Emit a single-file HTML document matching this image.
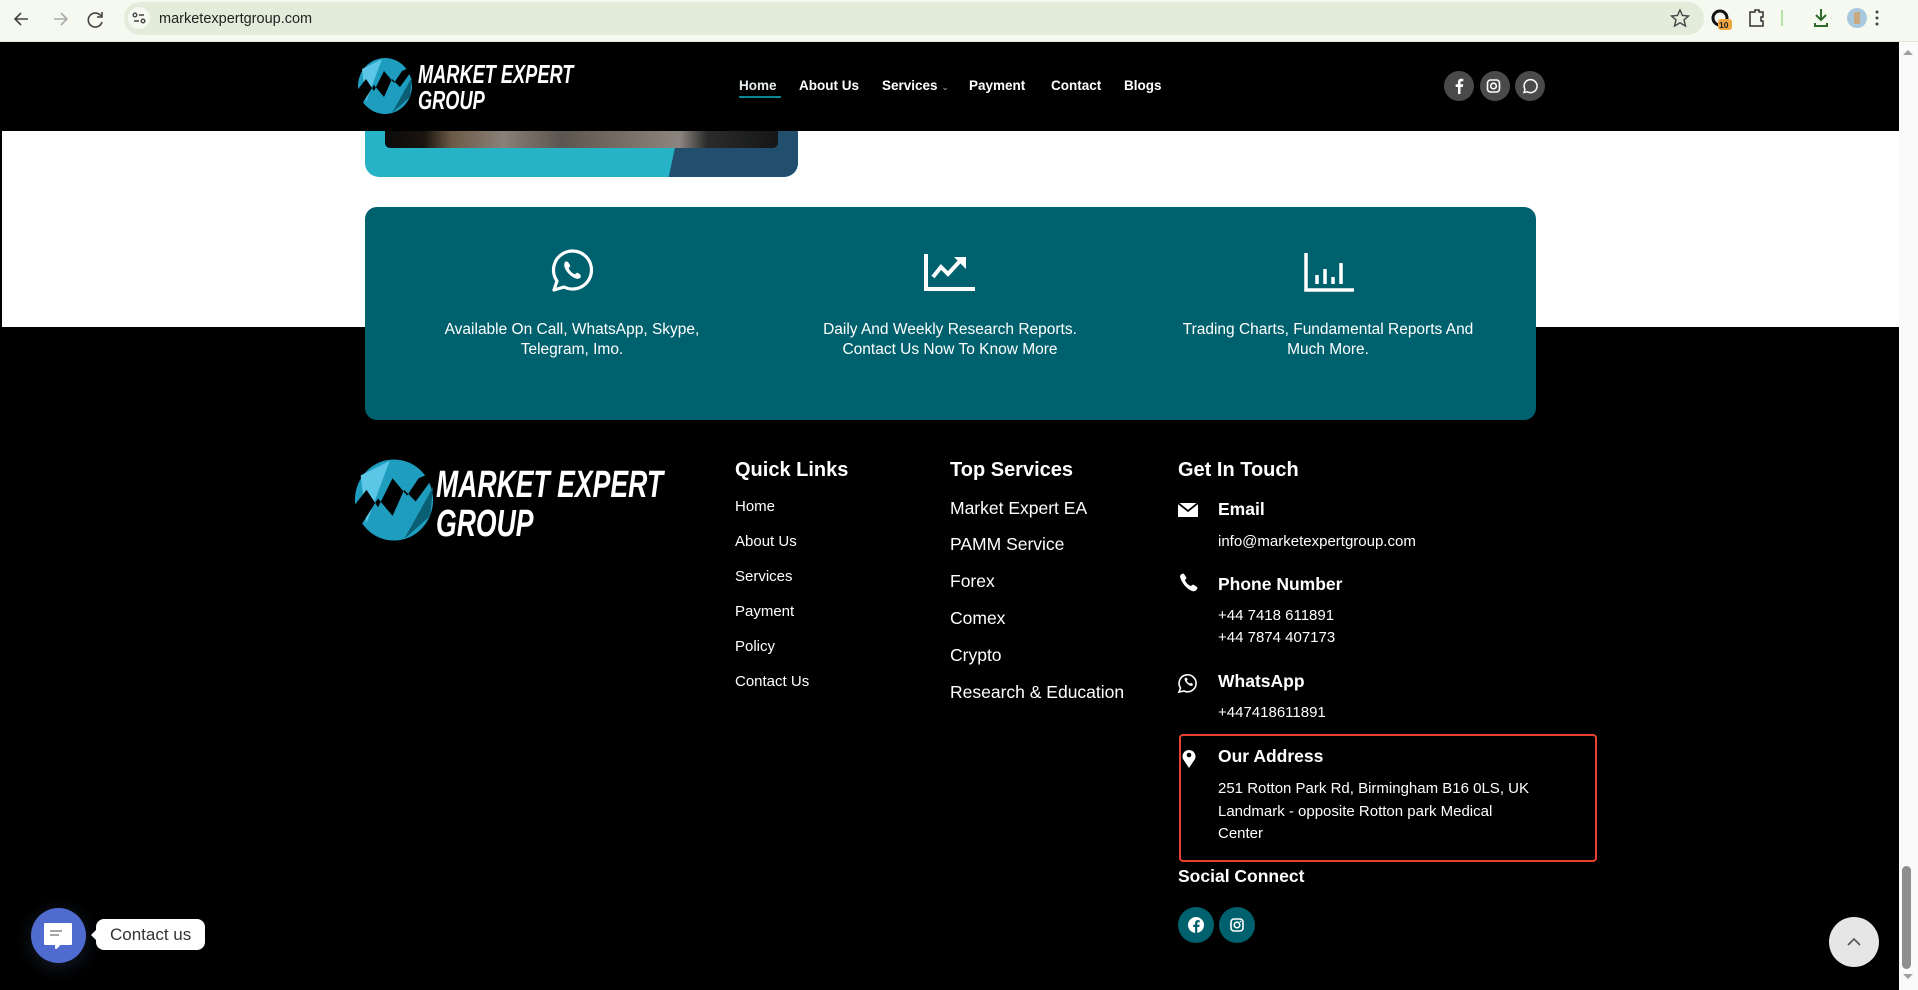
<!DOCTYPE html>
<html><head><meta charset="utf-8">
<style>
*{margin:0;padding:0;box-sizing:border-box}
body{width:1918px;height:990px;overflow:hidden;background:#000;font-family:"Liberation Sans",sans-serif;position:relative;color:#fff}
.abs{position:absolute}
.chrome{left:0;top:0;width:1918px;height:42px;background:#f5f9f0;border-bottom:1px solid #dfe5da}
.url{left:124px;top:2px;width:1580px;height:33px;background:#e3ecdb;border-radius:17px}
.hdr{left:0;top:42px;width:1899px;height:89px;background:#000}
.white{left:2px;top:131px;width:1897px;height:196px;background:#fff}
.nav{top:78px;font-size:13.5px;font-weight:bold;color:#fff}
.soc{width:30px;height:30px;border-radius:50%;background:#4a4a4a;top:71px}
.logo-t{font-style:italic;font-weight:bold;color:#fff;line-height:1;white-space:nowrap;transform-origin:0 0;transform:scaleX(0.7)}
.teal{left:365px;top:207px;width:1171px;height:213px;background:#00616e;border-radius:12px}
.ft{font-size:15.5px;text-align:center;line-height:20px;color:#fff;width:380px}
.h{font-size:20px;font-weight:bold}
.ql{font-size:15px;left:735px}
.ts{font-size:17.5px;left:950px}
.lbl{left:1218px;font-size:17.5px;font-weight:bold}
.val{left:1218px;font-size:15px;line-height:22px}
</style></head><body>
<div class="abs chrome"></div>
<div class="abs url"></div>
<svg class="abs" style="left:0;top:0" width="1918" height="42">
<g stroke="#444" stroke-width="1.6" fill="none">
<path d="M28 19h-12M21 13l-6 6 6 6"/>
<path d="M54 19h12M61 13l6 6-6 6" stroke="#aaa"/>
<path d="M101 16a7 7 0 1 0 1 6M102 12v5h-5"/>
</g>
<circle cx="139" cy="18" r="11" fill="#f5f9f0"/>
<g stroke="#444" stroke-width="1.4" fill="none"><circle cx="135" cy="15" r="1.8"/><path d="M139 15h5M134 21h5"/><circle cx="143" cy="21" r="1.8"/></g>
<text x="159" y="23" font-size="14.5" fill="#222" font-family="Liberation Sans">marketexpertgroup.com</text>
<path d="M1680 10l2.5 5.5 6 .5-4.5 4 1.5 6-5.5-3.2-5.5 3.2 1.5-6-4.5-4 6-.5z" fill="none" stroke="#444" stroke-width="1.4"/>
<circle cx="1720" cy="18" r="7" fill="none" stroke="#111" stroke-width="3"/>
<rect x="1718" y="19" width="14" height="11" rx="3" fill="#f0a640"/><text x="1719" y="28" font-size="8.5" fill="#222" font-weight="bold">10</text>
<path d="M1750 12h5v-2h4v2h4v5h-2v4h2v5h-13z" fill="none" stroke="#333" stroke-width="1.5"/>
<rect x="1781" y="10" width="2" height="16" fill="#b6e3a8"/>
<path d="M1821 9v10M1816 15l5 5 5-5M1815 23v3h12v-3" fill="none" stroke="#2e6b2a" stroke-width="2"/>
<circle cx="1857" cy="18" r="10" fill="#a8c8e0"/><rect x="1854" y="12" width="6" height="12" fill="#caa880"/>
<circle cx="1877" cy="12" r="1.5" fill="#444"/><circle cx="1877" cy="18" r="1.5" fill="#444"/><circle cx="1877" cy="24" r="1.5" fill="#444"/>
</svg>
<div class="abs hdr"></div>
<svg class="abs" style="left:352px;top:57px" width="66" height="58" viewBox="0 0 66 58">
<ellipse cx="33" cy="29" rx="27" ry="28" fill="#1e9dbf"/>
<path d="M10 12 L30 2 L14 45z" fill="#5cc6e6"/><path d="M40 56 L60 20 L58 40z" fill="#0a5f74"/>
<path d="M0 40 L14 22 L22 34 L32 14 L42 26 L50 14 L64 8 L48 30 L40 22 L32 40 L22 28 L8 50z" fill="#000"/>
</svg>
<div class="abs logo-t" style="left:418px;top:61px;font-size:26px">MARKET EXPERT</div>
<div class="abs logo-t" style="left:418px;top:87px;font-size:26px">GROUP</div>
<div class="abs nav" style="left:739px;color:#e6eef0">Home</div>
<div class="abs" style="left:739px;top:96px;width:42px;height:2px;background:#0a8592"></div>
<div class="abs nav" style="left:799px">About Us</div>
<div class="abs nav" style="left:882px">Services <span style="font-size:9px;color:#aaa;font-weight:normal">&#8964;</span></div>
<div class="abs nav" style="left:969px">Payment</div>
<div class="abs nav" style="left:1051px">Contact</div>
<div class="abs nav" style="left:1124px">Blogs</div>
<div class="abs soc" style="left:1444px"></div><div class="abs soc" style="left:1480px"></div><div class="abs soc" style="left:1515px"></div>
<svg class="abs" style="left:1444px;top:71px" width="101" height="30">
<path d="M16.5 23v-7h2.3l.4-2.7h-2.7v-1.7c0-.8.3-1.3 1.4-1.3h1.4V7.9c-.3 0-1.1-.1-2-.1-2 0-3.3 1.2-3.3 3.4v2.1h-2.3V16h2.3v7z" fill="#fff"/>
<rect x="43.5" y="9" width="12" height="12" rx="3" fill="none" stroke="#fff" stroke-width="1.6"/><circle cx="49.5" cy="15" r="2.8" fill="none" stroke="#fff" stroke-width="1.6"/>
<path d="M80 21.5l1-3a6.5 6.5 0 1 1 2.4 2.3z" fill="none" stroke="#fff" stroke-width="1.5"/>
</svg>
<div class="abs white"></div>
<div class="abs" style="left:1899px;top:42px;width:19px;height:948px;background:#fafafa"></div>
<div class="abs" style="left:1902px;top:866px;width:9px;height:103px;background:#8f8f8f;border-radius:5px"></div>
<svg class="abs" style="left:1899px;top:42px" width="19" height="948"><path d="M4 13l5-5 5 5z" fill="#a0a0a0"/><path d="M4 932l5 5 5-5z" fill="#a0a0a0"/></svg>
<div class="abs" style="left:365px;top:131px;width:433px;height:46px;border-radius:0 0 14px 14px;overflow:hidden;background:#26b2c7">
<div class="abs" style="left:305px;top:-20px;width:300px;height:120px;background:#224f6e;border-radius:40px 0 0 0;transform:skewX(-12deg)"></div>
<div class="abs" style="left:20px;top:0;width:393px;height:17px;border-radius:0 0 5px 5px;background:linear-gradient(90deg,#0b0b0b 0%,#1a1410 10%,#6b5a47 17%,#8a8078 30%,#5c554f 45%,#7a6f66 62%,#8c857f 75%,#2a2b2b 82%,#151616 100%)"></div>
</div>
<div class="abs teal"></div>
<svg class="abs" style="left:548px;top:248px" width="48" height="46" viewBox="0 0 48 46">
<path d="M6 42l3-9A19 19 0 1 1 16 39z" fill="none" stroke="#fff" stroke-width="3.2" stroke-linejoin="round"/>
<path d="M17 14c2-2 4 1 5 3s-2 2-1 4 3 4 5 5 2-2 4-1 4 3 2 5-7 0-11-4-6-9-4-12z" fill="#fff"/>
</svg>
<svg class="abs" style="left:924px;top:252px" width="52" height="40">
<path d="M2 2v35h49" fill="none" stroke="#fff" stroke-width="4"/>
<path d="M9 25l8-10 7 7 12-13" fill="none" stroke="#fff" stroke-width="4"/><path d="M30 5h12v12z" fill="#fff"/>
</svg>
<svg class="abs" style="left:1304px;top:253px" width="50" height="40">
<path d="M2 0v37h48" fill="none" stroke="#fff" stroke-width="3.5"/>
<path d="M13 22v9M21 16v15M29 24v7M37 10v21" stroke="#fff" stroke-width="3.5"/>
</svg>
<div class="abs ft" style="left:382px;top:320px">Available On Call, WhatsApp, Skype,<br>Telegram, Imo.</div>
<div class="abs ft" style="left:760px;top:320px">Daily And Weekly Research Reports.<br>Contact Us Now To Know More</div>
<div class="abs ft" style="left:1138px;top:320px">Trading Charts, Fundamental Reports And<br>Much More.</div>
<svg class="abs" style="left:344px;top:458px" width="100" height="84" viewBox="0 0 66 58">
<ellipse cx="33" cy="29" rx="27" ry="28" fill="#1e9dbf"/>
<path d="M10 12 L30 2 L14 45z" fill="#5cc6e6"/><path d="M40 56 L60 20 L58 40z" fill="#0a5f74"/>
<path d="M0 40 L14 22 L22 34 L32 14 L42 26 L50 14 L64 8 L48 30 L40 22 L32 40 L22 28 L8 50z" fill="#000"/>
</svg>
<div class="abs logo-t" style="left:436px;top:466px;font-size:38px">MARKET EXPERT</div>
<div class="abs logo-t" style="left:436px;top:505px;font-size:38px">GROUP</div>
<div class="abs h" style="left:735px;top:459px">Quick Links</div>
<div class="abs ql" style="top:498px">Home</div>
<div class="abs ql" style="top:533px">About Us</div>
<div class="abs ql" style="top:568px">Services</div>
<div class="abs ql" style="top:603px">Payment</div>
<div class="abs ql" style="top:638px">Policy</div>
<div class="abs ql" style="top:673px">Contact Us</div>
<div class="abs h" style="left:950px;top:459px">Top Services</div>
<div class="abs ts" style="top:498px">Market Expert EA</div>
<div class="abs ts" style="top:534px">PAMM Service</div>
<div class="abs ts" style="top:571px">Forex</div>
<div class="abs ts" style="top:608px">Comex</div>
<div class="abs ts" style="top:645px">Crypto</div>
<div class="abs ts" style="top:682px">Research &amp; Education</div>
<div class="abs h" style="left:1178px;top:459px">Get In Touch</div>
<svg class="abs" style="left:1176px;top:500px" width="26" height="280">
<path d="M2 3h20v14H2z" fill="#fff"/><path d="M2 3l10 8 10-8" fill="none" stroke="#000" stroke-width="1.8"/>
<path d="M4 76c1-2 3-3 4-2l2 3c1 1 0 2-1 3 1 3 3 5 6 6 1-1 2-2 3-1l3 2c1 1 0 3-2 4-4 2-14-7-15-15z" fill="#fff"/>
<path d="M3 192l1.5-4A8.5 8.5 0 1 1 8 191z" fill="none" stroke="#fff" stroke-width="1.6"/>
<path d="M9 178c1-1 2 0 2.5 1s-1 1-.5 2 1.5 2 2.5 2.5 1-1 2-.5 2 1.5 1 2.5-3.5 0-5.5-2-3-4.5-2-5.5z" fill="#fff"/>
<path d="M13 268l-6-9a6.5 6.5 0 1 1 12 0z" fill="#fff"/><circle cx="13" cy="255" r="2.3" fill="#000"/>
</svg>
<div class="abs lbl" style="top:499px">Email</div>
<div class="abs val" style="top:531px">info@marketexpertgroup.com</div>
<div class="abs lbl" style="top:574px">Phone Number</div>
<div class="abs val" style="top:605px">+44 7418 611891<br>+44 7874 407173</div>
<div class="abs lbl" style="top:671px">WhatsApp</div>
<div class="abs val" style="top:702px">+447418611891</div>
<div class="abs" style="left:1179px;top:734px;width:418px;height:128px;border:2.5px solid #e8412e;border-radius:4px"></div>
<div class="abs lbl" style="top:746px">Our Address</div>
<div class="abs val" style="top:778px;line-height:22.5px">251 Rotton Park Rd, Birmingham B16 0LS, UK<br>Landmark - opposite Rotton park Medical<br>Center</div>
<div class="abs" style="left:1178px;top:866px;font-size:17.5px;font-weight:bold">Social Connect</div>
<div class="abs" style="left:1178px;top:907px;width:36px;height:36px;border-radius:50%;background:#00616e"></div>
<div class="abs" style="left:1219px;top:907px;width:36px;height:36px;border-radius:50%;background:#00616e"></div>
<svg class="abs" style="left:1178px;top:907px" width="78" height="36">
<circle cx="18" cy="18" r="8" fill="#fff"/><path d="M19.3 26v-6h2l.3-2.3h-2.3v-1.4c0-.7.2-1.1 1.2-1.1h1.2v-2c-.3 0-1-.1-1.8-.1-1.7 0-2.8 1-2.8 2.9v1.7h-1.9V20h1.9v6z" fill="#00616e"/>
<rect x="53" y="12" width="12" height="12" rx="3" fill="none" stroke="#fff" stroke-width="1.6"/><circle cx="59" cy="18" r="2.8" fill="none" stroke="#fff" stroke-width="1.6"/><circle cx="62.5" cy="14.5" r=".8" fill="#fff"/>
</svg>
<div class="abs" style="left:31px;top:908px;width:55px;height:55px;border-radius:50%;background:#4f6bd0;box-shadow:0 4px 18px rgba(60,80,120,.35)"></div>
<svg class="abs" style="left:42px;top:922px" width="32" height="30"><path d="M3 2h26v20H18l-4 4v-4H3z" fill="#fff" stroke="#fff" stroke-linejoin="round" stroke-width="2"/><path d="M8 9h12M8 13h9" stroke="#888" stroke-width="1.6"/></svg>
<div class="abs" style="left:96px;top:919px;width:109px;height:31px;background:#fff;border-radius:8px;color:#333;font-size:17px;line-height:31px;padding-left:14px">Contact us</div>
<div class="abs" style="left:91px;top:929px;width:0;height:0;border-top:6px solid transparent;border-bottom:6px solid transparent;border-right:6px solid #fff"></div>
<div class="abs" style="left:1829px;top:917px;width:50px;height:50px;border-radius:50%;background:#e6e6e6"></div>
<svg class="abs" style="left:1829px;top:917px" width="50" height="50"><path d="M19 28l6-6 6 6" fill="none" stroke="#555" stroke-width="1.6"/></svg>
</body></html>
